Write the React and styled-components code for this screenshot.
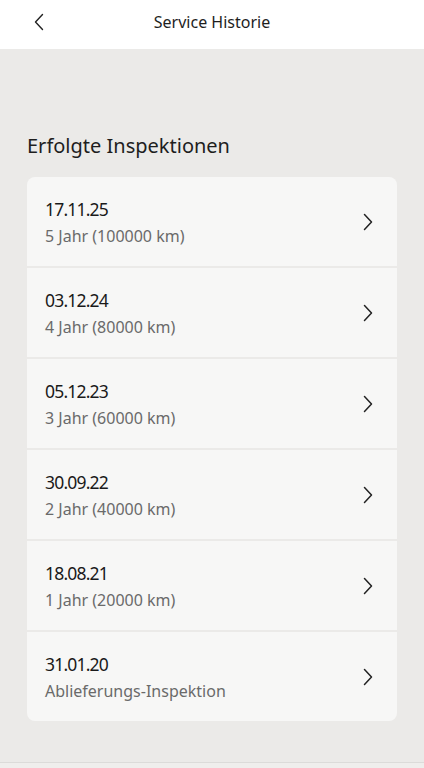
import React from "react";
import styled, { createGlobalStyle } from "styled-components";

const Global = createGlobalStyle`
  html, body { margin: 0; padding: 0; background: #ebeae8; }
  body { font-family: "Noto Sans", "Open Sans", sans-serif; -webkit-font-smoothing: antialiased; }
  * { box-sizing: border-box; }
`;

const Page = styled.div`
  width: 424px;
  height: 768px;
  display: flex;
  flex-direction: column;
  background: #ebeae8;
  overflow: hidden;
`;

const Header = styled.header`
  height: 49px;
  flex-shrink: 0;
  background: #ffffff;
  display: grid;
  grid-template-columns: 60px 1fr 60px;
  align-items: center;
`;

const BackButton = styled.button`
  border: 0;
  background: none;
  padding: 0 0 0 34px;
  height: 49px;
  display: flex;
  align-items: center;
  color: #222;
  cursor: pointer;
  margin-top: -5px;
`;

const Title = styled.h1`
  margin: 0;
  text-align: center;
  font-size: 16px;
  font-weight: 400;
  color: #1e1e1e;
  margin-top: -5px;
`;

const Content = styled.main`
  flex: 1;
  padding: 83px 27px 0 27px;
  display: flex;
  flex-direction: column;
`;

const SectionTitle = styled.h2`
  margin: 0 0 17px 0;
  font-size: 20px;
  font-weight: 400;
  color: #1e1e1e;
  line-height: 28px;
`;

const List = styled.ul`
  list-style: none;
  margin: 0;
  padding: 0;
  border-radius: 8px;
  overflow: hidden;
  display: flex;
  flex-direction: column;
  gap: 2px;
`;

const Row = styled.li`
  height: 89px;
  background: #f7f7f6;
  display: flex;
  align-items: center;
  justify-content: space-between;
  padding: 0 24px 0 18px;
`;

const Texts = styled.div`
  display: flex;
  flex-direction: column;
  gap: 5px;
`;

const DateText = styled.span`
  font-size: 17.5px;
  color: #1a1a1a;
  line-height: 24px;
  letter-spacing: -0.8px;
`;

const SubText = styled.span`
  font-size: 16px;
  color: #6a6a6a;
  line-height: 20px;
`;

const Footer = styled.div`
  height: 6px;
  flex-shrink: 0;
  border-top: 1px solid #dcdbd9;
  background: #efeeec;
`;

const Chevron = ({ color = "#222" }) => (
  <svg width="10" height="18" viewBox="0 0 10 18" fill="none">
    <path d="M1.5 1.5 L8.5 9 L1.5 16.5" stroke={color} strokeWidth="1.5" strokeLinecap="round" strokeLinejoin="round" />
  </svg>
);

const BackChevron = () => (
  <svg width="10" height="18" viewBox="0 0 10 18" fill="none">
    <path d="M8.5 1.5 L1.5 9 L8.5 16.5" stroke="#222" strokeWidth="1.4" strokeLinecap="round" strokeLinejoin="round" />
  </svg>
);

const items = [
  { date: "17.11.25", sub: "5 Jahr (100000 km)" },
  { date: "03.12.24", sub: "4 Jahr (80000 km)" },
  { date: "05.12.23", sub: "3 Jahr (60000 km)" },
  { date: "30.09.22", sub: "2 Jahr (40000 km)" },
  { date: "18.08.21", sub: "1 Jahr (20000 km)" },
  { date: "31.01.20", sub: "Ablieferungs-Inspektion" },
];

export default function App() {
  return (
    <>
      <Global />
      <Page>
        <Header>
          <BackButton aria-label="Zurück">
            <BackChevron />
          </BackButton>
          <Title>Service Historie</Title>
          <span />
        </Header>
        <Content>
          <SectionTitle>Erfolgte Inspektionen</SectionTitle>
          <List>
            {items.map((it) => (
              <Row key={it.date}>
                <Texts>
                  <DateText>{it.date}</DateText>
                  <SubText>{it.sub}</SubText>
                </Texts>
                <Chevron />
              </Row>
            ))}
          </List>
        </Content>
        <Footer />
      </Page>
    </>
  );
}
